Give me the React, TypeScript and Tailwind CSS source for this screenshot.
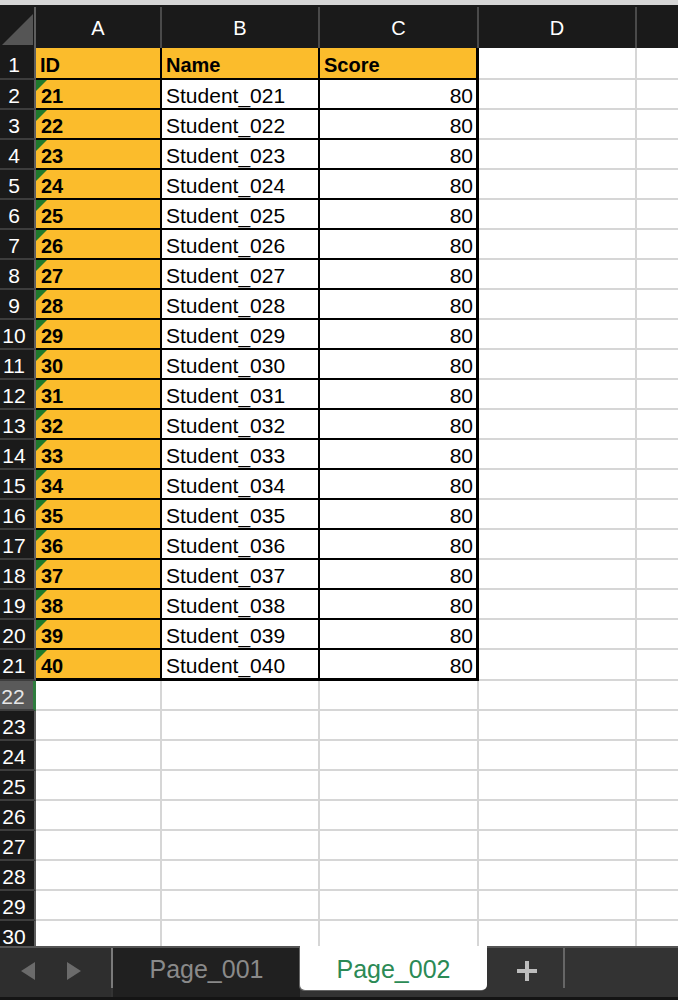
import React from "react";

const COLS = ["A", "B", "C", "D"];

const data = Array.from({ length: 20 }, (_, i) => {
  const id = 21 + i;
  return { id, name: `Student_0${id}`, score: 80 };
});

const RowHeader = ({ n, active }: { n: number; active?: boolean }) => (
  <div
    className={
      active
        ? "w-[36px] shrink-0 flex items-center justify-center pr-[7px] pt-[3px] text-[21px] bg-[#5a5a5a] text-[#e6e6e6] border-b-2 border-b-[#3d3d3d] border-r-[3px] border-r-[#2e7d3e]"
        : "w-[36px] shrink-0 flex items-center justify-center pr-[6px] pt-[3px] text-[21px] bg-[#1a1a1a] text-white border-b-2 border-b-[#3d3d3d] border-r-2 border-r-[#5e5e5e]"
    }
  >
    {n}
  </div>
);

const Flag = () => (
  <svg className="absolute left-0 top-0" width="11" height="11" viewBox="0 0 11 11">
    <polygon points="0,0 11,0 0,11" fill="#1f7a2c" />
  </svg>
);

const App = () => {
  const emptyRows = Array.from({ length: 9 }, (_, i) => 22 + i);

  return (
    <div className="w-[678px] h-[1000px] overflow-hidden bg-white flex flex-col font-['Liberation_Sans',Arial,sans-serif]">
      {/* top strip */}
      <div className="h-[5px] shrink-0 bg-[#d6d6d6]" />

      {/* column headers */}
      <div className="h-[43px] shrink-0 flex bg-[#1a1a1a] text-white text-[20px] pt-[2px]">
        <div className="w-[36px] shrink-0 relative border-r-2 border-[#5e5e5e]">
          <svg className="absolute left-[2px] top-[7px]" width="31" height="31" viewBox="0 0 31 31">
            <polygon points="31,0 31,31 0,31" fill="#555555" />
          </svg>
        </div>
        <div className="w-[126px] shrink-0 flex items-center justify-center border-r-2 border-[#4a4a4a]">A</div>
        <div className="w-[158px] shrink-0 flex items-center justify-center border-r-2 border-[#4a4a4a]">B</div>
        <div className="w-[159px] shrink-0 flex items-center justify-center border-r-2 border-[#4a4a4a]">C</div>
        <div className="w-[158px] shrink-0 flex items-center justify-center border-r-2 border-[#4a4a4a]">{COLS[3]}</div>
        <div className="flex-1" />
      </div>

      {/* sheet body */}
      <div className="flex-1 overflow-hidden text-[20px] text-black">
        {/* row 1: headings */}
        <div className="h-[32px] flex">
          <RowHeader n={1} />
          <div className="w-[126px] shrink-0 flex items-center pl-[4px] pt-[4px] font-bold bg-[#fbbc2c] border-b-2 border-r-2 border-black">ID</div>
          <div className="w-[158px] shrink-0 flex items-center pl-[4px] pt-[4px] font-bold bg-[#fbbc2c] border-b-2 border-r-2 border-black">Name</div>
          <div className="w-[159px] shrink-0 flex items-center pl-[4px] pt-[4px] font-bold bg-[#fbbc2c] border-b-2 border-r-[3px] border-black">Score</div>
          <div className="w-[158px] shrink-0 border-b-2 border-r-2 border-[#d6d6d6]" />
          <div className="flex-1 border-b-2 border-[#d6d6d6]" />
        </div>

        {data.map((row, i) => {
          const last = i === data.length - 1;
          return (
            <div key={row.id} className={`${last ? "h-[31px]" : "h-[30px]"} flex`}>
              <RowHeader n={i + 2} />
              <div
                className={`w-[126px] shrink-0 relative flex items-center pl-[5px] pt-[3px] font-bold bg-[#fbbc2c] border-r-2 border-black ${
                  last ? "border-b-[3px]" : "border-b-2"
                }`}
              >
                <Flag />
                <span className="relative">{row.id}</span>
              </div>
              <div
                className={`w-[158px] shrink-0 flex items-center pl-[4px] pt-[3px] text-[21px] border-r-2 border-black ${
                  last ? "border-b-[3px]" : "border-b-2"
                }`}
              >
                {row.name}
              </div>
              <div
                className={`w-[159px] shrink-0 flex items-center justify-end pr-[3px] pt-[3px] text-[21px] border-r-[3px] border-black ${
                  last ? "border-b-[3px]" : "border-b-2"
                }`}
              >
                {row.score}
              </div>
              <div className="w-[158px] shrink-0 border-b-2 border-r-2 border-[#d6d6d6]" />
              <div className="flex-1 border-b-2 border-[#d6d6d6]" />
            </div>
          );
        })}

        {emptyRows.map((n) => (
          <div key={n} className="h-[30px] flex">
            <RowHeader n={n} active={n === 22} />
            <div className="w-[126px] shrink-0 border-b-2 border-r-2 border-[#d6d6d6]" />
            <div className="w-[158px] shrink-0 border-b-2 border-r-2 border-[#d6d6d6]" />
            <div className="w-[159px] shrink-0 border-b-2 border-r-2 border-[#d6d6d6]" />
            <div className="w-[158px] shrink-0 border-b-2 border-r-2 border-[#d6d6d6]" />
            <div className="flex-1 border-b-2 border-[#d6d6d6]" />
          </div>
        ))}
      </div>

      {/* sheet tabs */}
      <div className="h-[54px] shrink-0 flex flex-col bg-[#333333] border-t-2 border-[#555555]">
        <div className="h-[49px] flex">
          <div className="w-[111px] shrink-0 bg-[#2e2e2e] flex items-start">
            <div className="h-[42px] flex-1 flex items-center gap-[32px] pl-[21px] pt-[4px]">
              <svg width="14" height="18" viewBox="0 0 14 18">
                <polygon points="14,0 14,18 0,9" fill="#6b6b6b" />
              </svg>
              <svg width="14" height="18" viewBox="0 0 14 18">
                <polygon points="0,0 0,18 14,9" fill="#6b6b6b" />
              </svg>
            </div>
          </div>
          <div className="w-[2px] h-[40px] shrink-0 bg-[#7a7a7a]" />
          <div className="w-[187px] shrink-0 bg-[#202020]">
            <div className="h-[42px] flex items-center justify-center pt-[2px] text-[25px] text-[#8a8a8a]">Page_001</div>
          </div>
          <div className="w-[187px] shrink-0 -mt-[2px] h-[44px] pt-[4px] bg-white rounded-b-[5px] shadow-[-1px_1px_0_#666] flex items-center justify-center text-[25px] text-[#2b8a55]">
            Page_002
          </div>
          <div className="w-[76px] shrink-0 h-[42px] flex items-center justify-center pl-[3px] pt-[4px]">
            <div className="relative w-[20px] h-[20px]">
              <div className="absolute left-0 top-[8px] w-[20px] h-[4px] bg-[#bdbdbd]" />
              <div className="absolute left-[8px] top-0 w-[4px] h-[20px] bg-[#bdbdbd]" />
            </div>
          </div>
          <div className="w-[2px] h-[40px] shrink-0 bg-[#666666]" />
          <div className="flex-1" />
        </div>
        <div className="h-[3px] bg-[#141414]" />
      </div>
    </div>
  );
};

export default App;
